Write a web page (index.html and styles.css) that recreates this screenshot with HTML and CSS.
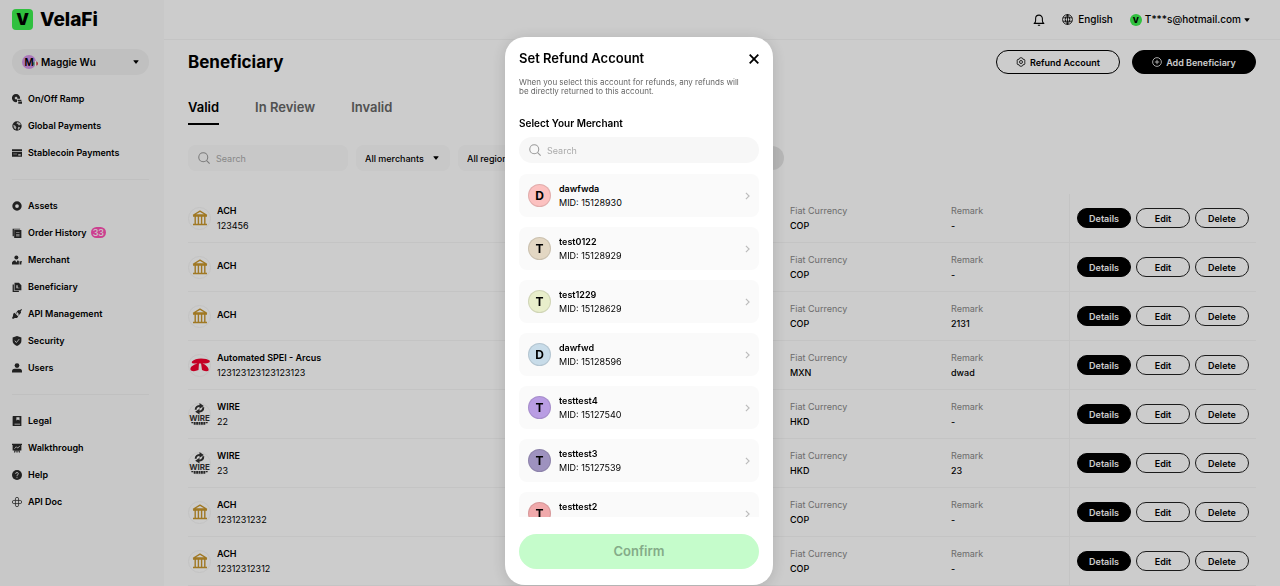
FILE: index.html
```html
<!DOCTYPE html>
<html lang="en">
<head>
    <meta charset="UTF-8">
    <meta name="viewport" content="width=device-width, initial-scale=1.0">
    <title>VelaFi - Beneficiary</title>
    <link rel="stylesheet" href="styles.css">
</head>
<body>
    <!-- Shared icons -->
    <svg class="sprite" aria-hidden="true">
        <symbol id="bank" viewBox="0 0 16 16"><path d="M8 1.2 14.500 5h-13zM1 6h14M3.200 6v8M6.400 6v8M9.600 6v8M12.800 6v8M1 14.500h14" fill="none" stroke="currentColor" stroke-width="1.400" stroke-linejoin="round"/></symbol>
        <symbol id="search" viewBox="0 0 16 16"><circle cx="7" cy="7" r="6" fill="none" stroke="currentColor" stroke-width="1.400"/><path d="m11.500 11.500 4 4" stroke="currentColor" stroke-width="1.400"/></symbol>
        <symbol id="caret" viewBox="0 0 8 5"><path d="M.8.300h6.400q.6 0 .2.600L4.500 4.500q-.5.500-1 0L.6.900Q.2.300.8.300z" fill="currentColor"/></symbol>
        <symbol id="chevron" viewBox="0 0 6 10"><path d="m1 1 4 4-4 4" fill="none" stroke="currentColor" stroke-width="1.400"/></symbol>
        <symbol id="wire" viewBox="0 0 24 24"><path d="M8 7q0-4 5-4M16 4.500q0 4.500-5 4.500" fill="none" stroke="currentColor" stroke-width="2"/><path d="m12 0 4.500 3-4.500 3zM12 6 7.500 9l4.500 3z" fill="currentColor"/><path d="M3.500 20.500h17M6 22h12" stroke="currentColor" stroke-width="1.500" stroke-dasharray="2 .5"/></symbol>
    </svg>

    <div class="layout">
        <!-- Sidebar -->
        <aside class="sidebar">
            <a href="#" class="logo"><span class="logo-mark">V</span>VelaFi</a>
            <button class="account">
                <span class="account-avatar">M<svg class="flag" viewBox="0 0 6 6"><path d="M0 3a3 3 0 0 1 2-2.800v5.600A3 3 0 0 1 0 3z" fill="#2c8a4a"/><path d="M2 0h2v6H2z" fill="#fff"/><path d="M6 3a3 3 0 0 1-2 2.800V.2A3 3 0 0 1 6 3z" fill="#dd3340"/></svg></span>
                <span class="account-name">Maggie Wu</span>
                <svg class="caret"><use href="#caret"/></svg>
            </button>
            <nav>
                <div class="nav-group">
                    <a href="#"><svg viewBox="0 0 16 16"><path fill-rule="evenodd" d="M6.500 0a6.500 6.500 0 0 1 6.400 7.500H8v5.300A6.500 6.500 0 1 1 6.500 0zm0 4L4 6.500 6.500 9 9 6.500z"/><path d="M9 9h6v2H9zM10 12h6v3.500h-6z"/></svg>On/Off Ramp</a>
                    <a href="#"><svg viewBox="0 0 16 16"><circle cx="8" cy="8" r="7.500"/><path fill="#ccc" d="M8.500 1.500 13 3l1 3-3 1-1.500-2L7 4zM2 6l3 1 2 3-1 3.500L3 11zM10 9l3 1-2 4-2-1z"/></svg>Global Payments</a>
                    <a href="#"><svg viewBox="0 0 16 16"><path fill-rule="evenodd" d="M0 2h16v3H0zM0 6.500h16V14H0zM2 9v1h6V9zM10 10h4v2h-4z"/></svg>Stablecoin Payments</a>
                </div>
                <div class="nav-group">
                    <a href="#"><svg viewBox="0 0 16 16"><path fill-rule="evenodd" d="M8 .5a7.500 7.500 0 1 1 0 15 7.500 7.500 0 0 1 0-15zM8 5a3 3 0 1 0 0 6 3 3 0 0 0 0-6z"/></svg>Assets</a>
                    <a href="#"><svg viewBox="0 0 16 16"><path d="M1 1h12v1.500H3V13H1z"/><path fill-rule="evenodd" d="M3.500 3H15v13H3.500zM6.500 7v1H12V7zM6.500 9.500v1H12v-1zM6.500 12v1H12v-1z"/></svg>Order History<span class="count">33</span></a>
                    <a href="#"><svg viewBox="0 0 16 16"><circle cx="7" cy="4" r="3.200"/><path d="M0 15V12q1-3 5-3.500L7 12l2-3.500 2 1V15zM12 10h4v1.500h-1V15h-3z"/></svg>Merchant</a>
                    <a href="#"><svg viewBox="0 0 16 16"><path d="M1 4h2v10h8v2H1z"/><path fill-rule="evenodd" d="M4 1h7l4 4v8H4zM7 5v5h5V9H9V5z"/></svg>Beneficiary</a>
                    <a href="#"><svg viewBox="0 0 16 16"><path d="m7.500 4 3-2.500 2 .5L15 0l1 1-2 2.500.5 2L12 9zM2 7.500 4 6l6 6-2 2.500H4.500L1.500 16 0 14.500l1.500-3zM6 6l1-1 1.500 1.500-1 1zM9.500 9.500l1-1 1 1-1 1z"/></svg>API Management</a>
                    <a href="#"><svg viewBox="0 0 16 16"><path d="m8 0 7 2.500V8q0 5-7 8-7-3-7-8V2.500z"/><path d="m4.500 7.500 2.500 3L11.500 5" fill="none" stroke="#ddd" stroke-width="1.500"/></svg>Security</a>
                    <a href="#"><svg viewBox="0 0 16 16"><circle cx="8" cy="4" r="3.800"/><path d="M0 15v-2q0-4 4-4h8q4 0 4 4v2z"/></svg>Users</a>
                </div>
                <div class="nav-group">
                    <a href="#"><svg viewBox="0 0 16 16"><path fill-rule="evenodd" d="M2 0h13v16H2q-1 0-1-1V1q0-1 1-1zm5 2v5l2.500-1.500L12 7V2zM4 12.500v1h9v-1z"/></svg>Legal</a>
                    <a href="#"><svg viewBox="0 0 16 16"><path d="M0 1h16v2h-1v9h-3l1 3h-2l-1-3H9v3H7v-3H6l-1 3H3l1-3H1V3H0z"/><path d="m4 9 3-3 2 2 3.500-3" fill="none" stroke="#ddd" stroke-width="1.500"/></svg>Walkthrough</a>
                    <a href="#"><svg viewBox="0 0 16 16"><circle cx="8" cy="8" r="8"/><path d="M5.800 6.200Q5.800 4 8 4t2.200 2Q10.200 7.500 8 8.500V10M8 11.500V13" fill="none" stroke="#ddd" stroke-width="1.500"/></svg>Help</a>
                    <a href="#"><svg viewBox="0 0 16 16"><path d="M5.500 5.500V3a2.500 2.500 0 0 1 5 0v10a2.500 2.500 0 0 1-5 0zM5.500 5.500H3a2.500 2.500 0 0 0 0 5h10a2.500 2.500 0 0 0 0-5z" fill="none" stroke="#2a2a2a" stroke-width="1.200"/></svg>API Doc</a>
                </div>
            </nav>
        </aside>

        <main class="main">
            <header class="topbar">
                <button class="plain" aria-label="Notifications"><svg class="bell" viewBox="0 0 16 16"><path d="M1.500 12.500q2-1.500 2-4V6a4.500 4.500 0 0 1 9 0v2.500q0 2.500 2 4zM6.500 15h3" fill="none" stroke="currentColor" stroke-width="1.400" stroke-linejoin="round"/></svg></button>
                <button class="plain language"><svg class="globe" viewBox="0 0 16 16"><path d="M8 .8a7.200 7.200 0 1 1 0 14.400A7.200 7.200 0 0 1 8 .8zM1.500 5.500h13M1.500 10.500h13M8 .8Q1.500 8 8 15.200 14.500 8 8 .8zM8 1v14" fill="none" stroke="currentColor" stroke-width="1.200"/></svg>English</button>
                <button class="plain profile"><span class="badge">V</span>T***s@hotmail.com<svg class="caret"><use href="#caret"/></svg></button>
            </header>

            <section class="content">
                <div class="title-row">
                    <h1>Beneficiary</h1>
                    <button class="btn"><svg viewBox="0 0 16 16"><path d="m5.500 2 2.500-1 2.500 1 .5 1.500 2.500.5 1 2.500-1 1.500 1 1.500-1 2.500-2.500.5-.5 1.500-2.500 1-2.500-1-.5-1.500-2.500-.5-1-2.500 1-1.500-1-1.500 1-2.500L5 3.500z" fill="none" stroke="currentColor" stroke-width="1.300"/><circle cx="8" cy="8" r="2.400" fill="none" stroke="currentColor" stroke-width="1.300"/></svg>Refund Account</button>
                    <button class="btn btn-dark"><svg viewBox="0 0 16 16"><path d="M8 1a7 7 0 1 1 0 14A7 7 0 0 1 8 1zM8 4.500v7M4.500 8h7" fill="none" stroke="currentColor" stroke-width="1.300"/></svg>Add Beneficiary</button>
                </div>

                <div class="tabs">
                    <button class="tab active">Valid</button>
                    <button class="tab">In Review</button>
                    <button class="tab">Invalid</button>
                </div>

                <div class="filters">
                    <label class="search"><svg><use href="#search"/></svg><input type="text" placeholder="Search" aria-label="Search beneficiaries"></label>
                    <div class="select"><select aria-label="Merchant"><option>All merchants</option></select><svg class="caret"><use href="#caret"/></svg></div>
                    <div class="select"><select aria-label="Region"><option>All regions</option></select><svg class="caret"><use href="#caret"/></svg></div>
                    <button class="reset" aria-label="Reset filters"></button>
                </div>

                <table class="list">
                    <tbody>
                        <tr>
                            <td><div class="method"><span class="method-icon bank"><svg><use href="#bank"/></svg></span><div><b>ACH</b><span>123456</span></div></div></td>
                            <td class="currency"><em>Fiat Currency</em><span>COP</span></td>
                            <td class="remark"><em>Remark</em><span>-</span></td>
                            <td class="actions"><div><button class="dark">Details</button><button>Edit</button><button>Delete</button></div></td>
                        </tr>
                        <tr>
                            <td><div class="method"><span class="method-icon bank"><svg><use href="#bank"/></svg></span><div><b>ACH</b><span></span></div></div></td>
                            <td class="currency"><em>Fiat Currency</em><span>COP</span></td>
                            <td class="remark"><em>Remark</em><span>-</span></td>
                            <td class="actions"><div><button class="dark">Details</button><button>Edit</button><button>Delete</button></div></td>
                        </tr>
                        <tr>
                            <td><div class="method"><span class="method-icon bank"><svg><use href="#bank"/></svg></span><div><b>ACH</b><span></span></div></div></td>
                            <td class="currency"><em>Fiat Currency</em><span>COP</span></td>
                            <td class="remark"><em>Remark</em><span>2131</span></td>
                            <td class="actions"><div><button class="dark">Details</button><button>Edit</button><button>Delete</button></div></td>
                        </tr>
                        <tr>
                            <td><div class="method"><span class="method-icon arcus"><svg viewBox="0 0 20 14"><path d="M2 3.500Q5 .5 11 .5t8.500 2Q21 5 15 5.500H4Q1 5.500 2 3.500zM9 5 8.500 12Q4 14 1 12.500-.5 11 1.500 8.500 4 6 9 5zM11 5q4.500 1 6.500 4 2 3 .5 4-4 .5-6-1z"/></svg></span><div><b>Automated SPEI - Arcus</b><span>123123123123123123</span></div></div></td>
                            <td class="currency"><em>Fiat Currency</em><span>MXN</span></td>
                            <td class="remark"><em>Remark</em><span>dwad</span></td>
                            <td class="actions"><div><button class="dark">Details</button><button>Edit</button><button>Delete</button></div></td>
                        </tr>
                        <tr>
                            <td><div class="method"><span class="method-icon wire"><svg><use href="#wire"/></svg><i>WIRE</i></span><div><b>WIRE</b><span>22</span></div></div></td>
                            <td class="currency"><em>Fiat Currency</em><span>HKD</span></td>
                            <td class="remark"><em>Remark</em><span>-</span></td>
                            <td class="actions"><div><button class="dark">Details</button><button>Edit</button><button>Delete</button></div></td>
                        </tr>
                        <tr>
                            <td><div class="method"><span class="method-icon wire"><svg><use href="#wire"/></svg><i>WIRE</i></span><div><b>WIRE</b><span>23</span></div></div></td>
                            <td class="currency"><em>Fiat Currency</em><span>HKD</span></td>
                            <td class="remark"><em>Remark</em><span>23</span></td>
                            <td class="actions"><div><button class="dark">Details</button><button>Edit</button><button>Delete</button></div></td>
                        </tr>
                        <tr>
                            <td><div class="method"><span class="method-icon bank"><svg><use href="#bank"/></svg></span><div><b>ACH</b><span>1231231232</span></div></div></td>
                            <td class="currency"><em>Fiat Currency</em><span>COP</span></td>
                            <td class="remark"><em>Remark</em><span>-</span></td>
                            <td class="actions"><div><button class="dark">Details</button><button>Edit</button><button>Delete</button></div></td>
                        </tr>
                        <tr>
                            <td><div class="method"><span class="method-icon bank"><svg><use href="#bank"/></svg></span><div><b>ACH</b><span>12312312312</span></div></div></td>
                            <td class="currency"><em>Fiat Currency</em><span>COP</span></td>
                            <td class="remark"><em>Remark</em><span>-</span></td>
                            <td class="actions"><div><button class="dark">Details</button><button>Edit</button><button>Delete</button></div></td>
                        </tr>
                    </tbody>
                </table>
            </section>
        </main>
    </div>

    <!-- Refund account popup -->
    <div class="overlay">
        <div class="modal" role="dialog" aria-labelledby="modalTitle">
            <div class="modal-head">
                <h2 id="modalTitle">Set Refund Account</h2>
                <button class="plain close" aria-label="Close"><svg viewBox="0 0 10 10"><path d="m.7.700 8.600 8.600M9.300.700.700 9.300" stroke="currentColor" stroke-width="1.800"/></svg></button>
            </div>
            <p class="modal-text">When you select this account for refunds, any refunds will be directly returned to this account.</p>
            <h3>Select Your Merchant</h3>
            <label class="search"><svg><use href="#search"/></svg><input type="text" placeholder="Search" aria-label="Search merchants"></label>
            <div class="merchants">
                <button class="merchant"><span class="avatar pink">D</span><span class="info"><b>dawfwda</b>MID: 15128930</span><svg><use href="#chevron"/></svg></button>
                <button class="merchant"><span class="avatar sand">T</span><span class="info"><b>test0122</b>MID: 15128929</span><svg><use href="#chevron"/></svg></button>
                <button class="merchant"><span class="avatar lime">T</span><span class="info"><b>test1229</b>MID: 15128629</span><svg><use href="#chevron"/></svg></button>
                <button class="merchant"><span class="avatar blue">D</span><span class="info"><b>dawfwd</b>MID: 15128596</span><svg><use href="#chevron"/></svg></button>
                <button class="merchant"><span class="avatar violet">T</span><span class="info"><b>testtest4</b>MID: 15127540</span><svg><use href="#chevron"/></svg></button>
                <button class="merchant"><span class="avatar purple">T</span><span class="info"><b>testtest3</b>MID: 15127539</span><svg><use href="#chevron"/></svg></button>
                <button class="merchant"><span class="avatar rose">T</span><span class="info"><b>testtest2</b>MID: 15127538</span><svg><use href="#chevron"/></svg></button>
            </div>
            <button class="confirm" disabled>Confirm</button>
        </div>
    </div>
</body>
</html>
```
FILE: styles.css
```css
* {
    box-sizing: border-box;
}
body {
    margin: 0;
    font-family: Inter, "Liberation Sans", sans-serif;
    font-size: 9px;
    line-height: 11px;
    color: #000;
    background: #fff;
    overflow: hidden;
}
button, input, select {
    font: inherit;
    color: inherit;
}
button {
    padding: 0;
    border: 0;
    background: none;
    cursor: pointer;
}
a {
    color: inherit;
    text-decoration: none;
}
h1, h2, h3, p {
    margin: 0;
}
svg {
    display: block;
    flex: none;
}
.sprite {
    display: none;
}
.caret {
    width: 6px;
    height: 4px;
}
.layout {
    display: flex;
    height: 100vh;
}

/* Sidebar */
.sidebar {
    flex: none;
    width: 164px;
    padding: 9px 15px 0 12px;
    background: #fafafa;
}
.logo {
    display: flex;
    align-items: center;
    gap: 7px;
    font-size: 19px;
    font-weight: 800;
    line-height: 21px;
}
.logo-mark {
    width: 21px;
    height: 21px;
    border-radius: 4px;
    background: #3df04f;
    font-size: 16px;
    font-weight: 900;
    text-align: center;
}
.account {
    display: flex;
    align-items: center;
    width: 100%;
    height: 26px;
    margin: 19px 0 10px;
    padding: 0 10px;
    border-radius: 13px;
    background: #f0f0f0;
    font-size: 10px;
    font-weight: 600;
}
.account-avatar {
    position: relative;
    width: 14px;
    height: 14px;
    border-radius: 50%;
    background: #d494e8;
    line-height: 14px;
}
.flag {
    position: absolute;
    right: -2px;
    bottom: 3px;
    width: 5px;
    height: 5px;
}
.account-name {
    flex: 1;
    margin-left: 5px;
    text-align: left;
}
.nav-group + .nav-group {
    margin-top: 13px;
    padding-top: 12px;
    border-top: 1px solid #f0f0f0;
}
.nav-group a {
    display: flex;
    align-items: center;
    gap: 6px;
    height: 27px;
    font-weight: 600;
}
.nav-group a svg {
    width: 10px;
    height: 10px;
    fill: #2a2a2a;
}
.count {
    margin-left: -2px;
    padding: 0 2px;
    border-radius: 6px;
    background: #ff50b4;
    color: #fff;
    font-weight: 500;
}

/* Top bar */
.main {
    flex: 1;
    min-width: 0;
}
.topbar {
    display: flex;
    align-items: center;
    justify-content: flex-end;
    height: 40px;
    padding-right: 30px;
    border-bottom: 1px solid #f5f5f5;
    font-size: 10px;
    font-weight: 500;
}
.plain {
    display: flex;
    align-items: center;
}
.bell {
    width: 12px;
    height: 12px;
}
.language {
    gap: 5px;
    margin: 0 17px;
}
.globe {
    width: 11px;
    height: 11px;
}
.profile {
    gap: 3px;
}
.badge {
    width: 12px;
    height: 12px;
    border-radius: 50%;
    background: #3df04f;
    font-size: 8px;
    font-weight: 800;
    line-height: 12px;
    text-align: center;
}

/* Content */
.content {
    padding: 10px 24px 0;
}
.title-row {
    display: flex;
    align-items: center;
    gap: 12px;
}
h1 {
    flex: 1;
    font-size: 17px;
    font-weight: 700;
    line-height: 24px;
}
.btn {
    display: flex;
    align-items: center;
    justify-content: center;
    gap: 4px;
    width: 124px;
    height: 24px;
    border: 1px solid #000;
    border-radius: 12px;
    font-weight: 600;
}
.btn svg {
    width: 10px;
    height: 10px;
}
.btn-dark {
    background: #000;
    color: #fff;
}
.tabs {
    display: flex;
    gap: 36px;
    margin: 20px 0;
}
.tab {
    height: 31px;
    padding-bottom: 2px;
    border-bottom: 2px solid transparent;
    color: #666;
    font-size: 13px;
    font-weight: 600;
}
.tab.active {
    border-color: #000;
    color: #000;
}
.search {
    display: flex;
    align-items: center;
    height: 26px;
    padding: 0 10px;
    border-radius: 8px;
    background: #f7f7f7;
}
.search svg {
    width: 12px;
    height: 12px;
    color: #999;
}
.search input {
    flex: 1;
    min-width: 0;
    margin-left: 6px;
    padding: 0;
    border: 0;
    outline: 0;
    background: none;
}
.search input::placeholder {
    color: #aaa;
    opacity: 1;
}
.filters {
    display: flex;
    align-items: center;
    gap: 8px;
    width: 596px;
    margin-bottom: 23px;
}
.filters .search {
    width: 160px;
    background: #fafafa;
}
.select {
    position: relative;
    width: 94px;
    height: 26px;
}
.select select {
    width: 100%;
    height: 100%;
    padding: 0 9px;
    border: 0;
    border-radius: 8px;
    appearance: none;
    background: #fafafa;
    font-weight: 500;
}
.select .caret {
    position: absolute;
    top: 11px;
    right: 11px;
}
.reset {
    width: 24px;
    height: 24px;
    margin-left: auto;
    border-radius: 12px;
    background: #e6e6e6;
}

/* Beneficiary list */
.list {
    width: 100%;
    border-spacing: 0;
    table-layout: fixed;
}
.list td {
    height: 49px;
    padding: 0;
    border-bottom: 1px solid #f5f5f5;
}
.list b, .list em, .list td span {
    display: block;
}
.list b {
    font-weight: 600;
}
.list em {
    margin-bottom: 4px;
    color: #888;
    font-style: normal;
}
.list .currency {
    width: 161px;
}
.list .remark {
    width: 118px;
}
.list .currency span, .list .remark span {
    font-weight: 500;
}
.method {
    display: flex;
    align-items: center;
    gap: 6px;
}
.method b {
    margin-bottom: 4px;
}
.list .method-icon {
    display: flex;
    align-items: center;
    justify-content: center;
    width: 23px;
    height: 23px;
    border: 1px solid #f5f5f5;
    border-radius: 50%;
}
.method-icon svg {
    width: 16px;
    height: 16px;
}
.bank {
    color: #c8962c;
}
.arcus svg {
    width: 20px;
    height: 14px;
    fill: #f5002e;
}
.wire {
    position: relative;
    color: #333;
}
.wire svg {
    width: 23px;
    height: 23px;
}
.wire i {
    position: absolute;
    top: 10px;
    font-size: 8px;
    font-style: normal;
    font-weight: 700;
    line-height: 9px;
}
.list .actions {
    width: 187px;
    padding-left: 7px;
    border-left: 1px solid #f5f5f5;
}
.actions div {
    display: flex;
    gap: 5px;
}
.actions button {
    width: 54px;
    height: 20px;
    border: 1px solid #222;
    border-radius: 10px;
    font-weight: 600;
}
.actions .dark {
    border-color: #000;
    background: #000;
    color: #fff;
}

/* Popup */
.overlay {
    position: fixed;
    inset: 0;
    display: flex;
    justify-content: center;
    padding: 37px 2px 1px 0;
    background: rgba(0, 0, 0, 0.2);
}
.modal {
    display: flex;
    flex-direction: column;
    width: 268px;
    padding: 13px 14px 16px;
    border-radius: 20px;
    background: #fff;
    box-shadow: 0 2px 16px rgba(0, 0, 0, 0.15);
}
.modal-head {
    display: flex;
    align-items: center;
    justify-content: space-between;
}
h2 {
    font-size: 13px;
    font-weight: 600;
    line-height: 17px;
}
.close svg {
    width: 10px;
    height: 10px;
}
.modal-text {
    margin: 11px 0 22px;
    padding-right: 10px;
    color: #666;
    font-size: 8px;
    line-height: 9px;
}
h3 {
    margin-bottom: 8px;
    font-size: 10px;
    font-weight: 600;
}
.modal .search {
    flex: none;
    border-radius: 13px;
}
.merchants {
    flex: 1;
    min-height: 0;
    margin: 11px 0 17px;
    overflow: hidden;
}
.merchant {
    display: flex;
    align-items: center;
    width: 100%;
    height: 43px;
    margin-bottom: 10px;
    padding: 0 9px;
    border-radius: 8px;
    background: #fafafa;
}
.avatar {
    width: 23px;
    height: 23px;
    border: 1px solid rgba(0, 0, 0, 0.1);
    border-radius: 50%;
    font-size: 12px;
    font-weight: 700;
    line-height: 21px;
}
.pink { background: #fcc1c0; }
.sand { background: #e3d7c3; }
.lime { background: #e8eecb; }
.blue { background: #c8dce9; }
.violet { background: #b99de3; }
.purple { background: #9e92bf; }
.rose { background: #f0a9ab; }
.info {
    flex: 1;
    margin-left: 8px;
    text-align: left;
}
.info b {
    display: block;
    margin-bottom: 3px;
    font-weight: 600;
}
.merchant svg {
    width: 5px;
    height: 8px;
    color: #bbb;
}
.confirm {
    flex: none;
    height: 35px;
    border-radius: 18px;
    background: #c5fccb;
    color: #84ab88;
    font-size: 13px;
    font-weight: 600;
}
```
